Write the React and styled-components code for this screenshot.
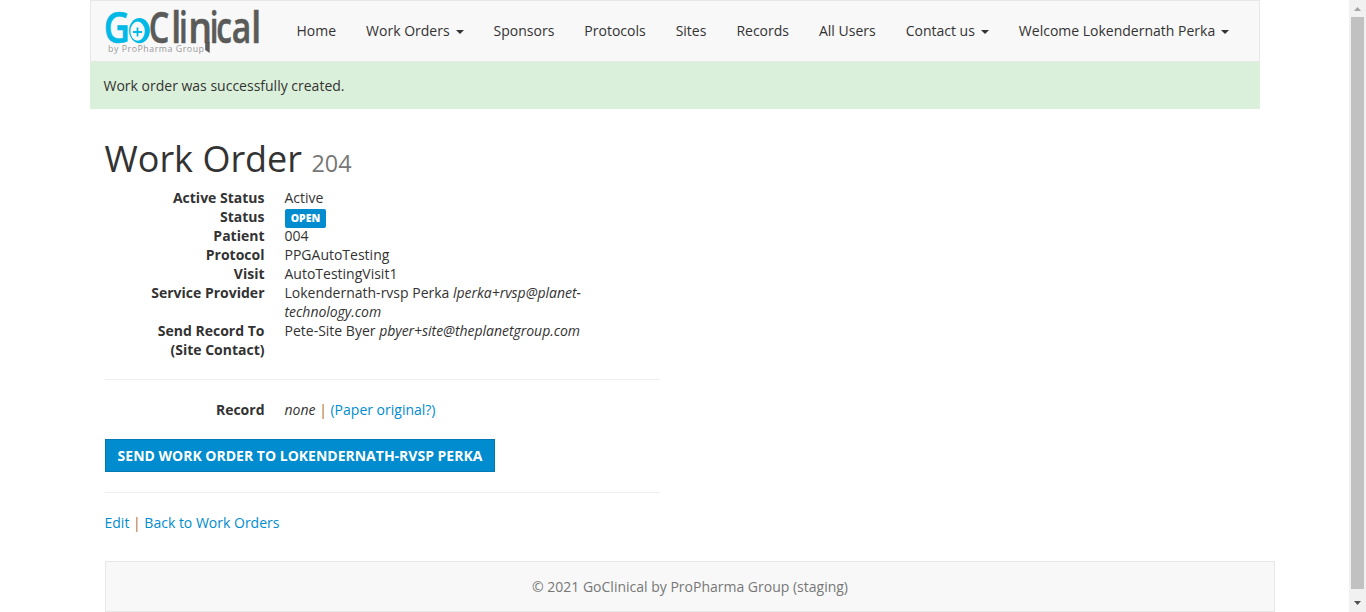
import React from "react";
import styled, { createGlobalStyle } from "styled-components";

const GlobalStyle = createGlobalStyle`
  * { box-sizing: border-box; }
  body {
    margin: 0;
    background: #fff;
    color: #333;
    font: 14px/19px "Open Sans", "Liberation Sans", sans-serif;
    overflow: hidden;
  }
`;

const Window = styled.div`
  display: flex;
  height: 612px;
  overflow: hidden;
`;

const Page = styled.div`
  flex: 1;
  min-width: 0;
`;

const Container = styled.div`
  width: 1170px;
  margin: 0 auto;
`;

const Navbar = styled.nav`
  display: flex;
  height: 62px;
  background: #f8f8f8;
  border: 1px solid #e7e7e7;
`;

const Brand = styled.a`
  display: block;
  width: 191px;
  padding: 5px 0 0 13.5px;
`;

const LogoArt = styled.svg`
  display: block;
  width: 158px;
  height: 50px;
  overflow: visible;
`;

const NavLink = styled.a`
  display: flex;
  align-items: center;
  height: 58px;
  padding: 0 15px;
  color: #333;
  white-space: nowrap;
`;

const Caret = styled.span`
  width: 0;
  height: 0;
  margin-left: 6px;
  margin-top: 4px;
  border-top: 4px solid #333;
  border-left: 4px solid transparent;
  border-right: 4px solid transparent;
`;

const Notice = styled.div`
  height: 47px;
  padding: 14px 14px;
  background: #dbf0da;
`;

const Content = styled.main`
  width: 585px;
  padding: 0 15px;
`;

const Title = styled.h1`
  margin: 30px 0 9px;
  font-size: 36px;
  line-height: 40px;
  font-weight: 400;
`;

const Number = styled.small`
  font-size: 23.4px;
  line-height: 1;
  color: #777;
`;

const Details = styled.dl`
  display: grid;
  grid-template-columns: 160px 300px;
  column-gap: 20px;
  margin: 0;
`;

const Term = styled.dt`
  font-weight: 700;
  text-align: right;
`;

const Value = styled.dd`
  margin: 0;
`;

const Email = styled.em`
  letter-spacing: -0.03px;
`;

const Badge = styled.span`
  display: block;
  width: 41px;
  height: 19px;
  margin-top: 2px;
  margin-bottom: -2px;
  padding-left: 1px;
  border-radius: 2px;
  background: #008cce;
  color: #fff;
  font-size: 10.5px;
  font-weight: 800;
  line-height: 19px;
  text-align: center;
`;

const Rule = styled.hr`
  height: 1px;
  margin: 20px 0;
  border: 0;
  background: #eee;
`;

const Link = styled.a`
  color: #008cce;
`;

const Divider = styled.span`
  color: #b06a20;
`;

const SendButton = styled.button`
  display: block;
  width: 390px;
  height: 33px;
  margin-top: 20px;
  padding: 0 0 0 1px;
  border: 1px solid #0079b5;
  background: #008cce;
  color: #fff;
  font: 700 14px/20px "Open Sans", sans-serif;
  white-space: nowrap;
`;

const Footer = styled.footer`
  height: 51px;
  margin: 29px -15px 0 15px;
  padding: 15px 0 0 1px;
  border: 1px solid #e7e7e7;
  background: #f8f8f8;
  color: #777;
  text-align: center;
`;

const ScrollTrack = styled.div`
  display: flex;
  flex-direction: column;
  align-items: center;
  width: 17px;
  background: #f1f1f1;
`;

const ScrollThumb = styled.div`
  width: 13px;
  height: 572px;
  background: #c1c1c1;
`;

const ScrollArrow = styled.svg`
  display: block;
  width: 17px;
  height: ${(p) => p.$h}px;
`;

const letters = [
  { c: "G", x: 106, w: 21.5, size: 44, fill: "#00b9e7" },
  { c: "C", x: 150.8, w: 17.5, size: 44 },
  { c: "l", x: 174.3, w: 4.2, size: 44 },
  { c: "i", x: 181.3, w: 4.2, size: 43 },
  { c: "n", x: 191.3, w: 18, size: 44 },
  { c: "i", x: 212.2, w: 4.2, size: 43 },
  { c: "c", x: 218, w: 13.2, size: 44 },
  { c: "a", x: 233.2, w: 15.2, size: 44 },
  { c: "l", x: 254.2, w: 4.2, size: 44 },
];

// Ink bounds of each semibold glyph, in em: left bearing and ink width.
const ink = {
  G: [0.06, 0.595],
  C: [0.06, 0.54],
  l: [0.083, 0.118],
  i: [0.075, 0.134],
  n: [0.083, 0.48],
  c: [0.052, 0.418],
  a: [0.043, 0.45],
};

function Logo() {
  return (
    <LogoArt viewBox="104 6 158 50" aria-label="GoClinical by ProPharma Group">
      {letters.map(({ c, x, w, size, fill = "#5a5a58" }, i) => {
        const [left, width] = ink[c];
        const sx = w / (width * size);
        return (
          <text
            key={i}
            transform={`translate(${x - left * size * sx} 43) scale(${sx} 1)`}
            fontFamily="Open Sans"
            fontWeight="600"
            fontSize={size}
            fill={fill}
            stroke={fill}
            strokeWidth="0.6"
          >
            {c}
          </text>
        );
      })}
      <path
        d="M139.500 18a10.400 12.600 0 1 0 0 25.200a10.400 12.600 0 1 0 0-25.200M137.600 21.600a7.200 9.600 0 1 1 0 19.200a7.200 9.600 0 1 1 0-19.200"
        fill="#00b9e7"
        fillRule="evenodd"
      />
      <path d="M137.500 27.500V36.500M133 32h9" stroke="#00b9e7" strokeWidth="1.800" />
      <path d="M205.200 42h4.500v11l-4.500-3z" fill="#5a5a58" />
      <text x="108" y="51.500" fontFamily="Open Sans" fontSize="8.800" fill="#999" textLength="96" lengthAdjust="spacing">
        by ProPharma Group
      </text>
    </LogoArt>
  );
}

const navItems = [
  ["Home"],
  ["Work Orders", true],
  ["Sponsors"],
  ["Protocols"],
  ["Sites"],
  ["Records"],
  ["All Users"],
  ["Contact us", true],
  ["Welcome Lokendernath Perka", true],
];

export default function App() {
  return (
    <>
      <GlobalStyle />
      <Window>
        <Page>
          <Container>
            <Navbar>
              <Brand><Logo /></Brand>
              {navItems.map(([label, menu]) => (
                <NavLink key={label}>{label}{menu && <Caret />}</NavLink>
              ))}
            </Navbar>
            <Notice>Work order was successfully created.</Notice>
            <Content>
              <Title>Work Order <Number>204</Number></Title>
              <Details>
                <Term>Active Status</Term><Value>Active</Value>
                <Term>Status</Term><Value><Badge>OPEN</Badge></Value>
                <Term>Patient</Term><Value>004</Value>
                <Term>Protocol</Term><Value>PPGAutoTesting</Value>
                <Term>Visit</Term><Value>AutoTestingVisit1</Value>
                <Term>Service Provider</Term>
                <Value>Lokendernath-rvsp Perka <Email>lperka+rvsp@planet-technology.com</Email></Value>
                <Term>Send Record To<br />(Site Contact)</Term>
                <Value>Pete-Site Byer <Email>pbyer+site@theplanetgroup.com</Email></Value>
              </Details>
              <Rule />
              <Details>
                <Term>Record</Term>
                <Value><em>none</em> <Divider>|</Divider> <Link>(Paper original?)</Link></Value>
              </Details>
              <SendButton>SEND WORK ORDER TO LOKENDERNATH-RVSP PERKA</SendButton>
              <Rule />
              <Link>Edit</Link> <Divider>|</Divider> <Link>Back to Work Orders</Link>
            </Content>
            <Footer>© 2021 GoClinical by ProPharma Group (staging)</Footer>
          </Container>
        </Page>
        <ScrollTrack>
          <ScrollArrow $h={17} viewBox="0 0 17 17"><path d="M5 11h7L8.500 7z" fill="#a3a3a3" /></ScrollArrow>
          <ScrollThumb />
          <ScrollArrow $h={23} viewBox="0 0 17 23"><path d="M5 12h7L8.500 16z" fill="#505050" /></ScrollArrow>
        </ScrollTrack>
      </Window>
    </>
  );
}
